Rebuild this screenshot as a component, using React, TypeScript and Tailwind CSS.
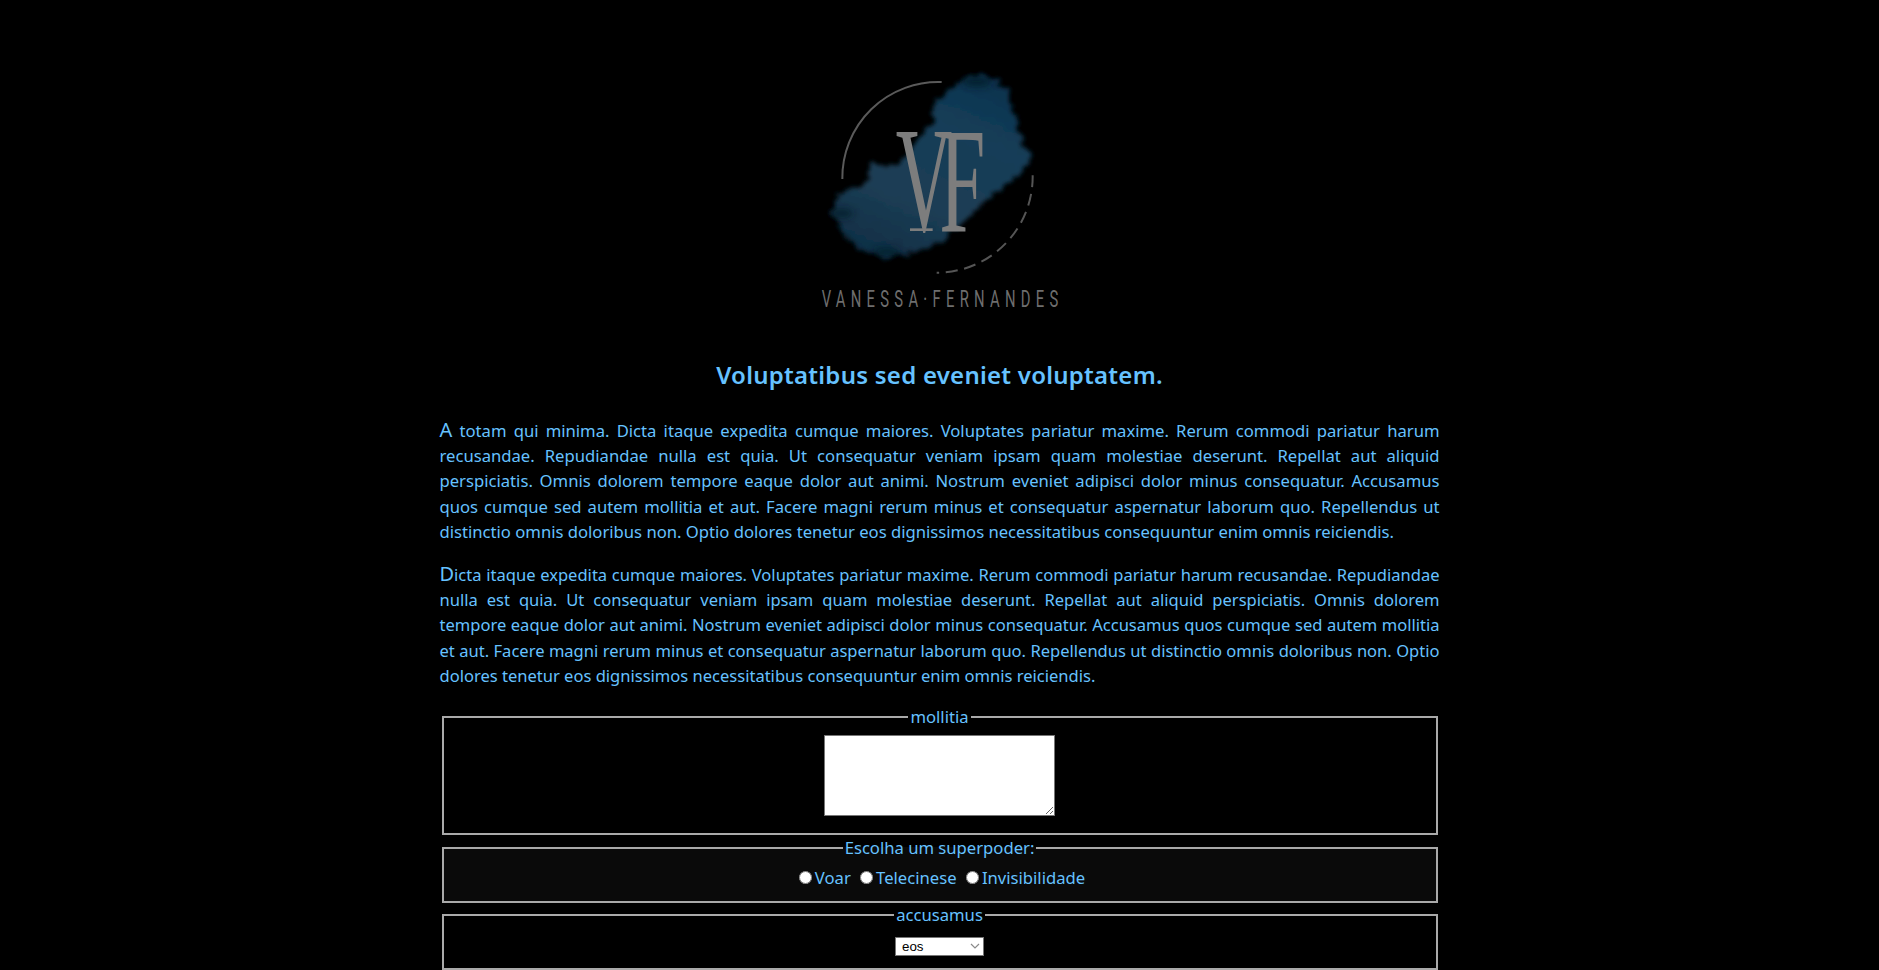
const P1 = 'A totam qui minima. Dicta itaque expedita cumque maiores. Voluptates pariatur maxime. Rerum commodi pariatur harum recusandae. Repudiandae nulla est quia. Ut consequatur veniam ipsam quam molestiae deserunt. Repellat aut aliquid perspiciatis. Omnis dolorem tempore eaque dolor aut animi. Nostrum eveniet adipisci dolor minus consequatur. Accusamus quos cumque sed autem mollitia et aut. Facere magni rerum minus et consequatur aspernatur laborum quo. Repellendus ut distinctio omnis doloribus non. Optio dolores tenetur eos dignissimos necessitatibus consequuntur enim omnis reiciendis.';
const P2 = 'Dicta itaque expedita cumque maiores. Voluptates pariatur maxime. Rerum commodi pariatur harum recusandae. Repudiandae nulla est quia. Ut consequatur veniam ipsam quam molestiae deserunt. Repellat aut aliquid perspiciatis. Omnis dolorem tempore eaque dolor aut animi. Nostrum eveniet adipisci dolor minus consequatur. Accusamus quos cumque sed autem mollitia et aut. Facere magni rerum minus et consequatur aspernatur laborum quo. Repellendus ut distinctio omnis doloribus non. Optio dolores tenetur eos dignissimos necessitatibus consequuntur enim omnis reiciendis.';

function Logo() {
  return (
    <svg width="320" height="290" viewBox="0 0 960 870">
      <defs>
        <filter id="cloud" x="-15%" y="-15%" width="130%" height="130%">
          <feTurbulence type="fractalNoise" baseFrequency="0.04" numOctaves="5" seed="11" result="n" />
          <feDisplacementMap in="SourceGraphic" in2="n" scale="36" xChannelSelector="R" yChannelSelector="G" />
          <feGaussianBlur stdDeviation="7" />
        </filter>
        <filter id="soft"><feGaussianBlur stdDeviation="1.4" /></filter>
        <filter id="dark"><feGaussianBlur stdDeviation="11" /></filter>
        <linearGradient id="ink" x1="0.75" y1="0" x2="0.3" y2="1">
          <stop offset="0" stopColor="#08324e" />
          <stop offset="0.3" stopColor="#163e58" />
          <stop offset="0.7" stopColor="#1c3d54" />
          <stop offset="1" stopColor="#0f2f46" />
        </linearGradient>
      </defs>
      <g filter="url(#soft)">
        <path d="M187 387 A 288 288 0 0 1 485 96" fill="none" stroke="#5a5a5a" strokeWidth="6" />
        <path d="M758 376 A 288 288 0 0 1 470 668" fill="none" stroke="#555" strokeWidth="6" strokeDasharray="36 20" />
      </g>
      <path
        d="M600 72 L680 110 L708 210 L728 290 L757 315 L720 370 L640 430 L560 510 L480 580 L330 628 L240 600 L200 560 L150 490 L180 430 L258 400 L268 342 L340 350 L400 290 L460 220 L470 150 L540 90 Z"
        fill="url(#ink)"
        filter="url(#cloud)"
      />
      <g filter="url(#dark)" fill="#061a28" opacity="0.75">
        <ellipse cx="590" cy="95" rx="45" ry="16" />
        <ellipse cx="185" cy="490" rx="35" ry="14" />
        <ellipse cx="320" cy="605" rx="40" ry="12" />
      </g>
      <g filter="url(#soft)" fill="#7d7d7d">
        <text transform="translate(347 542) scale(0.52 1)" fontFamily="Liberation Serif" fontSize="452">V</text>
        <text transform="translate(478 542) scale(0.55 1)" fontFamily="Liberation Serif" fontSize="452">F</text>
        <rect x="390" y="535" width="68" height="8" />
      </g>
      <text transform="translate(125 772) scale(0.6 1)" textLength="1183" lengthAdjust="spacing" fontFamily="Roboto" fontWeight="400" fontSize="74" fill="#6e6e6e">VANESSA·FERNANDES</text>
    </svg>
  );
}

function Radio({ label }: { label: string }) {
  return (
    <label className="inline-flex items-center">
      <input type="radio" name="p" className="w-[13px] h-[13px] mr-[3px] ml-[5px]" />
      {label}
    </label>
  );
}

export default function App() {
  return (
    <div className="h-[970px] overflow-hidden bg-black text-[#66c2ff] font-['Noto_Sans',sans-serif]">
      <div className="w-[1000px] mx-auto">
        <div className="pt-[50px] flex justify-center">
          <Logo />
        </div>
        <h1 className="text-center text-[24px] leading-[28px] font-semibold mt-[21px] tracking-[0.25px]">Voluptatibus sed eveniet voluptatem.</h1>
        <p className="text-justify text-[16.65px] leading-[25.2px] mt-[28px] first-letter:text-[20px]">{P1}</p>
        <p className="text-justify text-[16.54px] leading-[25.2px] mt-[17px] first-letter:text-[20px]">{P2}</p>
        <form className="mt-[19px] text-[16.65px] leading-[19px] text-center">
          <fieldset className="mx-[2px] border-2 border-[#a9a9a9] pt-[9px] h-[128px]">
            <legend className="mx-auto px-[2px]">mollitia</legend>
            <textarea className="block mx-auto w-[231px] h-[81px] bg-white border border-[#767676] resize-y" />
          </fieldset>
          <fieldset className="mx-[2px] mt-[3px] border-2 border-[#a9a9a9] bg-[#0a0a0a] h-[65px] pt-[11px]">
            <legend className="mx-auto px-[2px]">Escolha um superpoder:</legend>
            <Radio label="Voar" /> <Radio label="Telecinese" /> <Radio label="Invisibilidade" />
          </fieldset>
          <fieldset className="mx-[2px] mt-[2px] border-2 border-[#a9a9a9] h-[65px] pt-[13px]">
            <legend className="mx-auto px-[2px]">accusamus</legend>
            <div className="relative w-[89px] h-[19px] mx-auto">
              <select className="block w-full h-full pl-[6px] bg-white text-black text-[13.33px] leading-[15px] text-left font-['Liberation_Sans',sans-serif] border border-[#767676] appearance-none">
                <option>eos</option>
              </select>
              <svg className="absolute right-[4px] top-[6px] pointer-events-none" width="10" height="6" viewBox="0 0 10 6" fill="none">
                <path d="M1 1l4 4 4-4" stroke="#8a8a8a" strokeWidth="1.2" />
              </svg>
            </div>
          </fieldset>
        </form>
      </div>
    </div>
  );
}
